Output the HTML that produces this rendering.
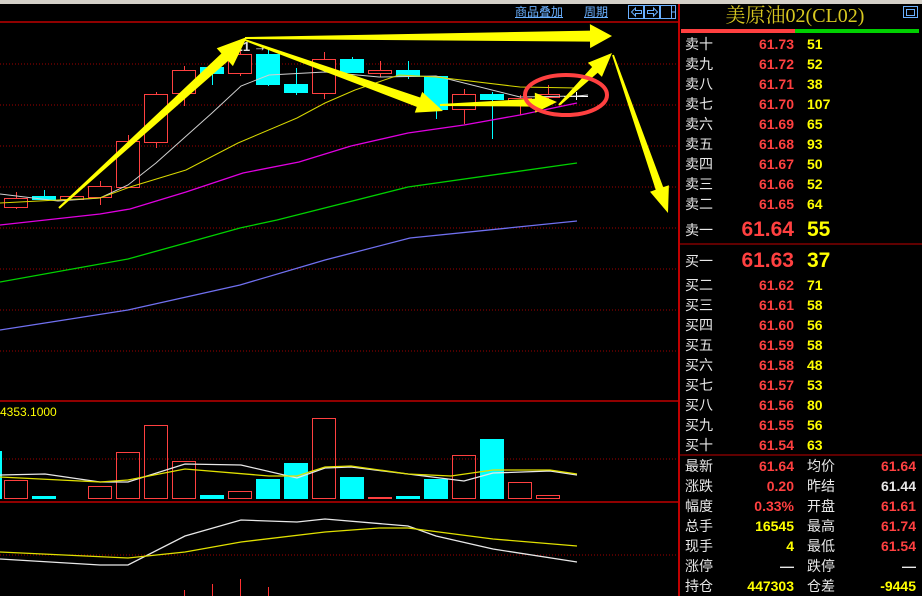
<!DOCTYPE html>
<html><head><meta charset="utf-8"><style>
html,body{margin:0;padding:0;background:#000;width:922px;height:596px;overflow:hidden;}
body{position:relative;font-family:"Liberation Sans","Noto Sans CJK SC",sans-serif;}
.top{position:absolute;left:0;top:0;width:922px;height:4px;background:#d4d0c8;}
.lk{position:absolute;top:5px;font-size:12px;color:#6ab0ff;text-decoration:underline;line-height:14px;font-family:"Liberation Sans","WenQuanYi Zen Hei",sans-serif;}
.panel{position:absolute;left:678px;top:4px;width:244px;height:592px;border-left:2px solid #c00000;box-sizing:border-box;}
.title{position:absolute;left:0;top:0;width:230px;text-align:center;font-family:"Liberation Serif","Noto Serif CJK SC",serif;font-size:20px;color:#d8c820;line-height:24px;}
.r{position:absolute;left:0;width:240px;height:20px;font-size:14px;line-height:20px;}
.r .l{position:absolute;left:5px;color:#e8e8e8;font-family:"Liberation Sans","WenQuanYi Zen Hei",sans-serif;}
.r .p{position:absolute;right:126px;color:#ff4040;font-weight:bold;}
.r .q{position:absolute;left:127px;color:#ffff00;font-weight:bold;}
.r .l2{position:absolute;left:127px;color:#e8e8e8;font-family:"Liberation Sans","WenQuanYi Zen Hei",sans-serif;}
.r .v2{position:absolute;right:4px;font-weight:bold;color:#ff4040;}
.big .p{font-size:21px;}
.big .q{font-size:21px;}
</style></head><body>
<div class="top"></div>
<svg width="922" height="596" style="position:absolute;left:0;top:0" id="s">
<line x1="0" y1="22" x2="678" y2="22" stroke="#c00000" stroke-width="1.5"/>
<g stroke="#a00000" stroke-dasharray="1,2" stroke-width="1">
<line x1="0" y1="64" x2="678" y2="64"/><line x1="0" y1="105" x2="678" y2="105"/><line x1="0" y1="146" x2="678" y2="146"/><line x1="0" y1="187" x2="678" y2="187"/><line x1="0" y1="228" x2="678" y2="228"/><line x1="0" y1="269" x2="678" y2="269"/><line x1="0" y1="310" x2="678" y2="310"/><line x1="0" y1="351" x2="678" y2="351"/><line x1="0" y1="459" x2="678" y2="459"/><line x1="0" y1="555" x2="678" y2="555"/>
</g>
<line x1="0" y1="401" x2="678" y2="401" stroke="#c00000" stroke-width="1.5"/>
<line x1="0" y1="502" x2="678" y2="502" stroke="#c00000" stroke-width="1.5"/>
<g fill="none" stroke="#6ab0ff" stroke-width="1"><rect x="628.5" y="5.5" width="15" height="13"/><rect x="644.5" y="5.5" width="15" height="13"/><rect x="660.5" y="5.5" width="15" height="13"/>
<path d="M631.5 12 L635.5 8 V10.5 H641.5 V13.5 H635.5 V16 Z"/>
<path d="M657.5 12 L653.5 8 V10.5 H647.5 V13.5 H653.5 V16 Z"/>
<path d="M671.5 6 V18 M671.5 12 H675"/></g>
<g id="c"></g>
<g fill="none" stroke-width="1">
<polyline stroke="#d0d0d0" points="0,194 58,201 100,198 128,185 156,163 212,113 241,86 269,75 325,72 379,77 436,76 520,97 577,96 588,95"/>
<polyline stroke="#d8d800" points="0,203 58,200 100,198 130,187 186,170 238,143 297,118 325,103 355,90 399,75 436,77 520,87 577,88"/>
<polyline stroke="#e000e0" stroke-width="1.3" points="0,225 100,214 130,209 186,192 243,173 299,162 351,146 408,133 464,125 520,115 577,103"/>
<polyline stroke="#00d000" stroke-width="1.3" points="0,282 128,259 240,228 277,220 408,187 577,163"/>
<polyline stroke="#7070f0" stroke-width="1.3" points="0,330 45,323 128,310 240,285 325,260 410,238 577,221"/>
<polyline stroke="#e8e8e8" stroke-width="1.3" points="0,475 45,474 100,482 128,482 185,464 241,465 297,478 325,468 351,467 408,474 464,481 493,473 550,471 577,475"/>
<polyline stroke="#e0e000" stroke-width="1.3" points="0,477 100,482 128,480 185,469 269,476 297,476 325,467 351,466 408,474 451,476 493,470 550,470 577,474"/>
<polyline stroke="#e8e8e8" stroke-width="1.3" points="0,559 100,565 128,565 185,536 241,520 297,522 325,519 408,526 436,536 493,549 577,562"/>
<polyline stroke="#e0e000" stroke-width="1.3" points="0,552 128,558 185,552 241,542 325,532 379,528 408,528 493,539 577,546"/>
</g>
<g stroke="#ff3030"><line x1="184.5" y1="590" x2="184.5" y2="596"/><line x1="212.5" y1="584" x2="212.5" y2="596"/><line x1="240.5" y1="579" x2="240.5" y2="596"/><line x1="268.5" y1="587" x2="268.5" y2="596"/></g>
<text x="0" y="416" fill="#ffff00" font-size="12" font-family="Liberation Sans">4353.1000</text>
<text x="232" y="51" fill="#e0e0e0" font-size="13" font-weight="bold" font-family="Liberation Sans">.21 →</text>
<g id="a" fill="#ffff00"></g>
<ellipse cx="566" cy="95" rx="41" ry="20" fill="none" stroke="#ff4040" stroke-width="4"/>
<line x1="679" y1="29" x2="679" y2="596" stroke="#c00000" stroke-width="2"/>
<rect x="681" y="29" width="114" height="4" fill="#ff4040"/><rect x="795" y="29" width="124" height="4" fill="#00d000"/>
<line x1="680" y1="244" x2="922" y2="244" stroke="#c00000"/>
<line x1="680" y1="455" x2="922" y2="455" stroke="#c00000"/>
<rect x="903.5" y="6.5" width="14" height="11" fill="none" stroke="#6ab0ff"/><rect x="906.5" y="9.5" width="8" height="6" fill="none" stroke="#6ab0ff"/>
</svg>
<div class="lk" style="left:515px">商品叠加</div>
<div class="lk" style="left:584px">周期</div>
<div class="panel">
<div class="title">美原油02(CL02)</div>
<div id="rows"></div>
</div>
<script>
var c=document.getElementById('c'),h='';
var K=[['r',198,207,192,209],['c',196,200,190,200],['r',196,199,196,199],['r',186,197,181,205],['r',141,187,135,187],['r',94,142,92,148],['r',70,93,66,106],['c',67,74,67,85],['r',54,73,47,76],['c',54,85,48,86],['c',84,93,68,95],['r',59,93,52,99],['c',59,73,57,73],['r',70,73,61,77],['c',70,77,61,79],['c',76,110,76,119],['r',94,109,89,124],['c',94,100,92,139],['r',98,101,95,115],['r',94,97,85,100],['w',96,96,92,100]];
K.forEach(function(k,i){var x=4+28*i,m=x+12;var col=k[0]=='r'?'#ff4040':k[0]=='c'?'#00ffff':'#ffffff';
h+='<line x1="'+(m+.5)+'" y1="'+k[3]+'" x2="'+(m+.5)+'" y2="'+k[4]+'" stroke="'+col+'"/>';
if(k[0]=='r')h+='<rect x="'+(x+.5)+'" y="'+(k[1]+.5)+'" width="23" height="'+Math.max(1,k[2]-k[1])+'" fill="#000" stroke="'+col+'"/>';
else h+='<rect x="'+x+'" y="'+k[1]+'" width="24" height="'+Math.max(1,k[2]-k[1])+'" fill="'+col+'"/>';});
var V=[['r',480],['c',496],['r',498],['r',486],['r',452],['r',425],['r',461],['c',495],['r',491],['c',479],['c',463],['r',418],['c',477],['f',497],['c',496],['c',479],['r',455],['c',439],['r',482],['r',495],['r',498]];
h+='<rect x="0" y="451" width="2" height="48" fill="#00ffff"/>';
V.forEach(function(v,i){var x=4+28*i;if(v[0]=='r')h+='<rect x="'+(x+.5)+'" y="'+(v[1]+.5)+'" width="23" height="'+(498-v[1])+'" fill="none" stroke="#ff4040"/>';else h+='<rect x="'+x+'" y="'+v[1]+'" width="24" height="'+(499-v[1])+'" fill="'+(v[0]=='c'?'#00ffff':'#ff4040')+'"/>';});
c.innerHTML=h;
function arr(x1,y1,x2,y2,tw,sw,hw,hl){var dx=x2-x1,dy=y2-y1,L=Math.sqrt(dx*dx+dy*dy),ux=dx/L,uy=dy/L,nx=-uy,ny=ux;var bx=x2-ux*hl,by=y2-uy*hl;
var p=[[x1+nx*tw/2,y1+ny*tw/2],[bx+nx*sw/2,by+ny*sw/2],[bx+nx*hw/2,by+ny*hw/2],[x2,y2],[bx-nx*hw/2,by-ny*hw/2],[bx-nx*sw/2,by-ny*sw/2],[x1-nx*tw/2,y1-ny*tw/2]];
return '<polygon points="'+p.map(function(q){return q[0].toFixed(1)+','+q[1].toFixed(1)}).join(' ')+'"/>';}
document.getElementById('a').innerHTML=
arr(59,208,247,37,2,10,24,30)+arr(245,38,612,36,2,11,24,22)+arr(245,40,443,111,2,10,22,26)+arr(440,105,557,102,2,8,20,22)+arr(559,105,612,53,2,8,20,24)+arr(613,55,668,213,2,8,20,26);
var R='',S=[['卖十','61.73','51'],['卖九','61.72','52'],['卖八','61.71','38'],['卖七','61.70','107'],['卖六','61.69','65'],['卖五','61.68','93'],['卖四','61.67','50'],['卖三','61.66','52'],['卖二','61.65','64']];
S.forEach(function(s,i){R+='<div class="r" style="top:'+(30+20*i)+'px"><span class="l">'+s[0]+'</span><span class="p">'+s[1]+'</span><span class="q">'+s[2]+'</span></div>';});
R+='<div class="r big" style="top:215px;height:22px;line-height:22px"><span class="l">卖一</span><span class="p">61.64</span><span class="q">55</span></div>';
R+='<div class="r big" style="top:246px;height:22px;line-height:22px"><span class="l">买一</span><span class="p">61.63</span><span class="q">37</span></div>';
var B=[['买二','61.62','71'],['买三','61.61','58'],['买四','61.60','56'],['买五','61.59','58'],['买六','61.58','48'],['买七','61.57','53'],['买八','61.56','80'],['买九','61.55','56'],['买十','61.54','63']];
B.forEach(function(s,i){R+='<div class="r" style="top:'+(271+20*i)+'px"><span class="l">'+s[0]+'</span><span class="p">'+s[1]+'</span><span class="q">'+s[2]+'</span></div>';});
var T=[['最新','61.64','#ff4040','均价','61.64','#ff4040'],['涨跌','0.20','#ff4040','昨结','61.44','#e8e8e8'],['幅度','0.33%','#ff4040','开盘','61.61','#ff4040'],['总手','16545','#ffff00','最高','61.74','#ff4040'],['现手','4','#ffff00','最低','61.54','#ff4040'],['涨停','—','#e8e8e8','跌停','—','#e8e8e8'],['持仓','447303','#ffff00','仓差','-9445','#ffff00']];
T.forEach(function(s,i){R+='<div class="r" style="top:'+(452+20*i)+'px"><span class="l">'+s[0]+'</span><span class="p" style="color:'+s[2]+'">'+s[1]+'</span><span class="l2">'+s[3]+'</span><span class="v2" style="color:'+s[5]+'">'+s[4]+'</span></div>';});
document.getElementById('rows').innerHTML=R;
</script>
</body></html>
